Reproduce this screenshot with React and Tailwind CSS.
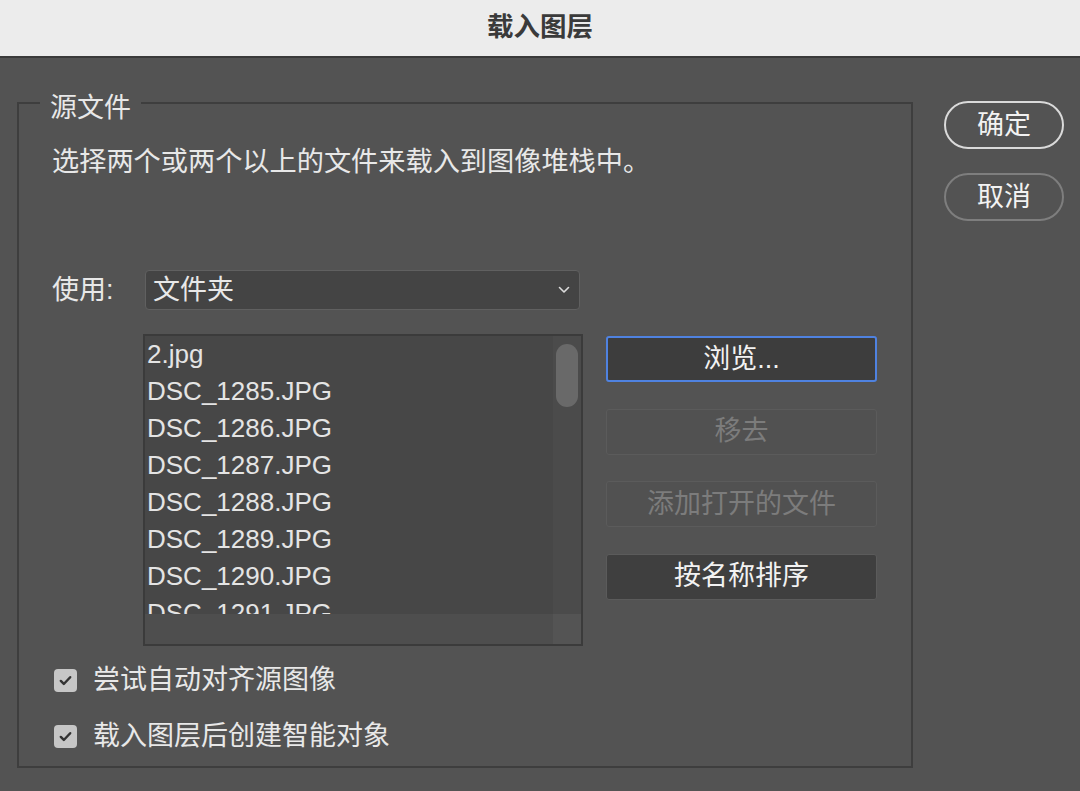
import React from 'react';

const files = ['2.jpg', 'DSC_1285.JPG', 'DSC_1286.JPG', 'DSC_1287.JPG', 'DSC_1288.JPG', 'DSC_1289.JPG', 'DSC_1290.JPG', 'DSC_1291.JPG'];

function Check() {
  return (
    <span className="w-[23px] h-[23px] rounded-[4px] bg-[#c6c6c6] flex items-center justify-center">
      <svg width="15" height="15" viewBox="0 0 16 16" fill="none">
        <path d="M3 8.5l3.2 3.2L13 4.5" stroke="#333" strokeWidth="2.6" strokeLinecap="round" strokeLinejoin="round" />
      </svg>
    </span>
  );
}

function SideButton({ label, kind }) {
  const styles = {
    focus: 'border-2 border-[#4f82e0] bg-[#3d3d3d] text-[#f2f2f2]',
    disabled: 'border border-[#5b5b5b] bg-[#515151] text-[#7c7c7c]',
    normal: 'border border-[#5b5b5b] bg-[#3f3f3f] text-[#f2f2f2]',
  };
  return (
    <div className={`h-[46px] rounded-[3px] flex items-center justify-center text-[27px] ${styles[kind]}`}>
      {label}
    </div>
  );
}

export default function App() {
  return (
    <div className="w-[1080px] h-[791px] bg-[#535353] flex flex-col overflow-hidden font-[family-name:Liberation_Sans,Noto_Sans_CJK_SC,sans-serif] text-[#e8e8e8]">
      {/* title bar */}
      <div className="h-[58px] shrink-0 bg-[#ececec] border-b-2 border-[#3a3a3a] flex items-center justify-center">
        <span className="text-[26.5px] font-semibold text-[#3a3a3a]">载入图层</span>
      </div>

      <div className="flex">
        <fieldset className="ml-[17px] mt-[24px] w-[896px] h-[686px] border-2 border-[#3e3e3e] pl-[33px]">
          <legend className="-ml-[12px] px-[10px] pt-[11px] text-[27px] leading-[30px]">源文件</legend>

          <p className="mt-[21px] text-[27.2px] leading-[36px]">选择两个或两个以上的文件来载入到图像堆栈中。</p>

          <div className="mt-[90px] flex items-center">
            <span className="w-[93px] text-[27px] leading-[40px]">使用:</span>
            <div className="w-[435px] h-[40px] rounded-[4px] bg-[#444444] border border-[#606060] flex items-center justify-between pl-[7px] pr-[9px]">
              <span className="text-[27px]">文件夹</span>
              <svg width="12" height="8" viewBox="0 0 12 8" fill="none">
                <path d="M1.5 1.5l4.5 4.5 4.5-4.5" stroke="#dcdcdc" strokeWidth="1.6" strokeLinecap="round" strokeLinejoin="round" />
              </svg>
            </div>
          </div>

          <div className="mt-[24px] ml-[91px] flex">
            <div className="w-[440px] h-[312px] border-2 border-[#3b3b3b] bg-[#474747] flex flex-col">
              <div className="flex-1 flex min-h-0">
                <div className="flex-1 overflow-hidden pl-[2px]">
                  {files.map((f) => (
                    <div key={f} className="text-[26px] leading-[37px] text-[#e4e4e4]">{f}</div>
                  ))}
                </div>
                <div className="w-[28px] bg-[#4b4b4b] pt-[8px] flex justify-center">
                  <div className="w-[22px] h-[63px] rounded-full bg-[#696969]" />
                </div>
              </div>
              <div className="h-[30px] shrink-0 flex bg-[#4e4e4e]">
                <div className="flex-1" />
                <div className="w-[28px] bg-[#545454]" />
              </div>
            </div>

            <div className="ml-[23px] mt-[2px] w-[271px] flex flex-col gap-[26.5px]">
              <SideButton label="浏览..." kind="focus" />
              <SideButton label="移去" kind="disabled" />
              <SideButton label="添加打开的文件" kind="disabled" />
              <SideButton label="按名称排序" kind="normal" />
            </div>
          </div>

          <div className="mt-[16px] h-[36px] flex items-center gap-[16px] pl-[2px]">
            <Check />
            <span className="text-[27px]">尝试自动对齐源图像</span>
          </div>
          <div className="mt-[20px] h-[36px] flex items-center gap-[16px] pl-[2px]">
            <Check />
            <span className="text-[27px]">载入图层后创建智能对象</span>
          </div>
        </fieldset>

        <div className="ml-[31px] mt-[43px] w-[120px] flex flex-col gap-[24px]">
          <div className="h-[48px] rounded-full border-2 border-[#dadada] flex items-center justify-center text-[27px] text-[#f2f2f2]">确定</div>
          <div className="h-[48px] rounded-full border-2 border-[#7e7e7e] flex items-center justify-center text-[27px] text-[#f2f2f2]">取消</div>
        </div>
      </div>
    </div>
  );
}
